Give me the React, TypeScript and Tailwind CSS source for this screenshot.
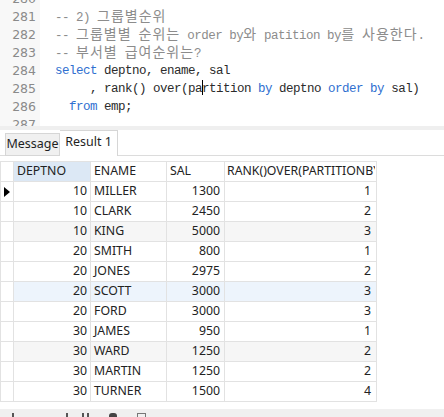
import { Fragment, type ReactNode } from 'react';

type Kind = 'c' | 'k' | 't';
type Token = [string, Kind];

const codeLines: { no: number; tokens: Token[] }[] = [
  { no: 280, tokens: [] },
  { no: 281, tokens: [['-- 2) 그룹별순위', 'c']] },
  { no: 282, tokens: [['-- 그룹별별 순위는 order by와 patition by를 사용한다.', 'c']] },
  { no: 283, tokens: [['-- 부서별 급여순위는?', 'c']] },
  {
    no: 284,
    tokens: [
      ['select', 'k'],
      [' deptno, ename, sal', 't'],
    ],
  },
  {
    no: 285,
    tokens: [
      ['     , rank() over(pa', 't'],
      ['|', 't'],
      ['rtition ', 't'],
      ['by', 'k'],
      [' deptno ', 't'],
      ['order', 'k'],
      [' ', 't'],
      ['by', 'k'],
      [' sal)', 't'],
    ],
  },
  {
    no: 286,
    tokens: [
      ['  from', 'k'],
      [' emp;', 't'],
    ],
  },
  { no: 287, tokens: [] },
];

const kindClass: Record<Kind, string> = {
  c: 'text-[#8c8c8c]',
  k: 'text-[#2f6fd0]',
  t: 'text-[#2b2b2b]',
};

// split hangul runs so they can get a slightly larger size
function withHangul(text: string): ReactNode[] {
  const parts = text.split(/([\uAC00-\uD7A3]+)/);
  return parts.map((part, i) =>
    /[\uAC00-\uD7A3]/.test(part) ? (
      <span key={i} className="text-[14px] tracking-[1px]">
        {part}
      </span>
    ) : (
      <Fragment key={i}>{part}</Fragment>
    ),
  );
}

const rows: [number, string, number, number][] = [
  [10, 'MILLER', 1300, 1],
  [10, 'CLARK', 2450, 2],
  [10, 'KING', 5000, 3],
  [20, 'SMITH', 800, 1],
  [20, 'JONES', 2975, 2],
  [20, 'SCOTT', 3000, 3],
  [20, 'FORD', 3000, 3],
  [30, 'JAMES', 950, 1],
  [30, 'WARD', 1250, 2],
  [30, 'MARTIN', 1250, 2],
  [30, 'TURNER', 1500, 4],
];

function rowBg(index: number) {
  if (index === 5) return 'bg-[#edf4fc]';
  if (index === 2 || index === 8) return 'bg-[#f6f6f6]';
  return 'bg-white';
}

export default function App() {
  return (
    <div className="h-[417px] w-[444px] overflow-hidden bg-white">
      {/* editor */}
      <div className="flex h-[126px] overflow-hidden font-['Liberation_Mono','Noto_Sans_CJK_KR',monospace] text-[12.5px] tracking-[-0.5px]">
        <div className="w-[40px] shrink-0 bg-[#f8f8f8]">
          <div className="-mt-[10px]">
            {codeLines.map((line) => (
              <div
                key={line.no}
                className="h-[18px] pr-[4px] text-right font-['DejaVu_Sans',sans-serif] text-[12.5px] leading-[18px] tracking-normal text-[#8a8a8a]"
              >
                {line.no}
              </div>
            ))}
          </div>
        </div>
        <div className="flex-1 pl-[15px]">
          <div className="-mt-[10px]">
            {codeLines.map((line) => (
              <div key={line.no} className="h-[18px] whitespace-pre leading-[18px]">
                {line.tokens.map(([text, kind], i) =>
                  text === '|' ? (
                    <span key={i} className="-mr-px inline-block h-[15px] w-px bg-black align-[-3px]" />
                  ) : (
                    <span key={i} className={kindClass[kind]}>
                      {withHangul(text)}
                    </span>
                  ),
                )}
              </div>
            ))}
          </div>
        </div>
      </div>
      <div className="h-[4px] bg-[#efefef]" />

      {/* result tabs */}
      <div className="relative flex h-[26px] items-end border-b border-[#dcdcdc] pl-[5px] font-['Noto_Sans',sans-serif] text-[12.5px] text-[#1f1f1f]">
        <div className="mb-[-1px] flex h-[23px] w-[55px] items-center justify-center border border-[#d6d6d6] bg-[#f0f0f0]">
          Message
        </div>
        <div className="mb-[-1px] flex h-[26px] w-[58px] items-center justify-center border border-b-0 border-l-0 border-[#d6d6d6] bg-white pb-[2px]">
          Result 1
        </div>
      </div>

      {/* grid */}
      <div className="pt-[5px] font-['Noto_Sans',sans-serif] text-[12.3px] text-[#222]">
        <table className="table-fixed border-collapse">
          <colgroup>
            <col className="w-[13px]" />
            <col className="w-[77px]" />
            <col className="w-[76px]" />
            <col className="w-[58px]" />
            <col className="w-[152px]" />
          </colgroup>
          <thead>
            <tr className="h-[20px]">
              <th className="border border-[#e2e2e2] bg-white" />
              <th className="border border-[#e2e2e2] bg-[#dce8f5] pl-[3px] text-left font-normal">DEPTNO</th>
              <th className="border border-[#e2e2e2] pl-[3px] text-left font-normal">ENAME</th>
              <th className="border border-[#e2e2e2] pl-[3px] text-left font-normal">SAL</th>
              <th className="overflow-hidden whitespace-nowrap border border-[#e2e2e2] pl-[2px] text-left font-normal">
                <div className="w-[148px] overflow-hidden">RANK()OVER(PARTITIONBYDEPTNOORDERBYSAL)</div>
              </th>
            </tr>
          </thead>
          <tbody>
            {rows.map(([dept, name, sal, rank], index) => (
              <tr key={name} className={`h-[20px] ${rowBg(index)}`}>
                <td className="border border-[#e2e2e2] bg-white p-0">
                  {index === 0 ? (
                    <div className="ml-[3px] h-0 w-0 border-y-[5px] border-l-[6px] border-y-transparent border-l-black" />
                  ) : null}
                </td>
                <td className="border border-[#e2e2e2] pr-[3px] text-right">{dept}</td>
                <td className="border border-[#e2e2e2] pl-[3px]">{name}</td>
                <td className="border border-[#e2e2e2] pr-[4px] text-right">{sal}</td>
                <td className="border border-[#e2e2e2] pr-[5px] text-right">{rank}</td>
              </tr>
            ))}
          </tbody>
        </table>
      </div>

      {/* bottom toolbar, cut off by the window */}
      <div className="mt-[7px] flex h-[20px] items-start gap-[14px] bg-[#f0f0f0] pl-[12px] pt-[4px]">
        <div className="h-[6px] w-[2px] bg-[#555]" />
        <div className="ml-[38px] h-[6px] w-[2px] bg-[#555]" />
        <div className="flex gap-[3px]">
          <div className="h-[6px] w-[2px] bg-[#555]" />
          <div className="h-[6px] w-[2px] bg-[#555]" />
        </div>
        <div className="ml-[6px] h-[6px] w-[8px] rounded-t-[3px] bg-[#444]" />
        <div className="ml-[6px] h-[6px] w-[9px] border border-[#777]" />
      </div>
    </div>
  );
}
